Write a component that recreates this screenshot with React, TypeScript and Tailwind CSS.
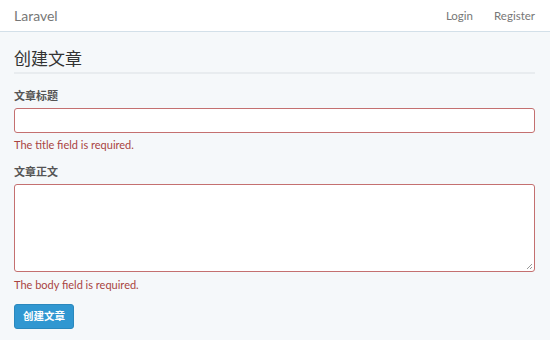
import React from 'react';

const font = { fontFamily: '"Lato", "Noto Sans CJK SC", sans-serif' };

export default function App() {
    return (
        <div className="w-[550px] h-[340px] overflow-hidden bg-[#f5f8fa] text-[#636b6f]" style={font}>
            {/* Navbar */}
            <nav className="h-[32px] bg-white border-b border-[#d3e0e9] flex items-center justify-between px-[14px]">
                <span className="text-[14px] text-[#777]">Laravel</span>
                <div className="flex items-center gap-[21px] text-[11.5px] text-[#777] pr-[1px]">
                    <span>Login</span>
                    <span>Register</span>
                </div>
            </nav>

            {/* Form */}
            <div className="px-[14px] pr-[15px]">
                <h1 className="mt-[15px] text-[17px] leading-[24px] text-[#333] pb-[1px] border-b-2 border-[#e8ecef]">
                    创建文章
                </h1>

                <label className="block mt-[15px] text-[11px] font-bold text-[#555] leading-[14px]">文章标题</label>
                <div className="mt-[5px] h-[25px] bg-white border border-[#c47070] rounded-[3px]" />
                <p className="mt-[5px] text-[11px] leading-[14px] text-[#a94442]">The title field is required.</p>

                <label className="block mt-[13px] text-[11px] font-bold text-[#555] leading-[14px]">文章正文</label>
                <div className="mt-[5px] h-[88px] bg-white border border-[#c47070] rounded-[3px] relative">
                    <svg className="absolute right-[1px] bottom-[1px]" width="7" height="7" viewBox="0 0 7 7">
                        <path d="M6 1 L1 6 M6 4 L4 6" stroke="#999" strokeWidth="1" />
                    </svg>
                </div>
                <p className="mt-[6px] text-[11px] leading-[14px] text-[#a94442]">The body field is required.</p>

                <button className="mt-[12px] h-[25px] px-[8px] rounded-[3px] bg-[#3097d1] border border-[#2a88bd] text-white text-[10.5px] font-bold">
                    创建文章
                </button>
            </div>
        </div>
    );
}
